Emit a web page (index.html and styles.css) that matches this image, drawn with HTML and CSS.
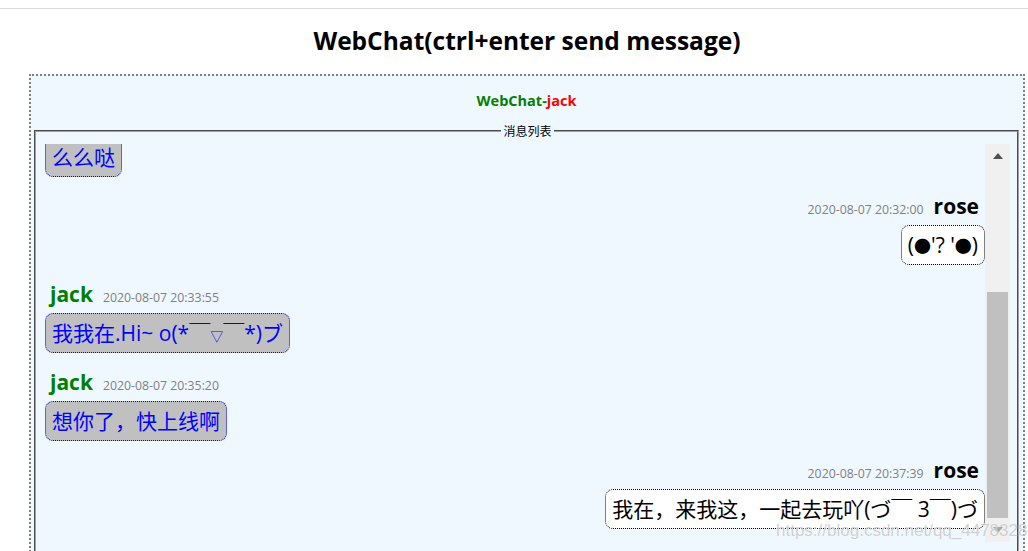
FILE: index.html
```html
<!DOCTYPE html>
<html lang="zh">
<head>
<meta charset="utf-8">
<title>WebChat</title>
<link rel="stylesheet" href="styles.css">
</head>
<body>
<div class="page">
  <div class="topline"></div>
  <h1 class="title">WebChat(ctrl+enter send message)</h1>
  <div class="chatbox">
    <div class="brand"><span class="brand-app">WebChat-</span><span class="brand-user">jack</span></div>
    <fieldset class="msgset">
      <legend class="msglegend">消息列表</legend>
      <div class="msgwrap">
        <div class="viewport">
          <div class="msglist">
            <div class="msg msg-left">
              <div class="bubble bubble-left">么么哒</div>
            </div>
            <div class="msg msg-right">
              <div class="meta"><span class="time">2020-08-07 20:32:00</span><span class="name name-rose">rose</span></div>
              <div class="bubble bubble-right">(<span class="dot">●</span>'? '<span class="dot">●</span>)</div>
            </div>
            <div class="msg msg-left">
              <div class="meta"><span class="name name-jack">jack</span><span class="time">2020-08-07 20:33:55</span></div>
              <div class="bubble bubble-left">我我在.Hi~ o(*￣<span class="tri">▽</span>￣*)ブ</div>
            </div>
            <div class="msg msg-left">
              <div class="meta"><span class="name name-jack">jack</span><span class="time">2020-08-07 20:35:20</span></div>
              <div class="bubble bubble-left">想你了，快上线啊</div>
            </div>
            <div class="msg msg-right">
              <div class="meta"><span class="time">2020-08-07 20:37:39</span><span class="name name-rose">rose</span></div>
              <div class="bubble bubble-right">我在，来我这，一起去玩吖(づ￣ 3￣)づ</div>
            </div>
          </div>
        </div>
        <div class="scrollbar">
          <div class="sb-btn"><span class="arrow-up"></span></div>
          <div class="sb-track"><div class="sb-thumb"></div></div>
          <div class="sb-btn"><span class="arrow-down"></span></div>
        </div>
      </div>
    </fieldset>
  </div>
  <div class="watermark">https://blog.csdn.net/qq_44783283</div>
</div>
</body>
</html>
```
FILE: styles.css
```css
html, body {
  margin: 0;
  padding: 0;
  background: #ffffff;
  overflow: hidden;
}
body {
  font-family: "Open Sans", "Noto Sans CJK SC", sans-serif;
  color: #000;
}
.page {
  position: relative;
  width: 1054px;
  height: 551px;
  overflow: hidden;
}
.topline {
  height: 8px;
  border-bottom: 1px solid #dadada;
}
.title {
  margin: 16px 0 17px;
  font-size: 24.5px;
  line-height: 32px;
  font-weight: 700;
  text-align: center;
}
.chatbox {
  margin: 0 29px;
  border: 2px dotted #808080;
  background: #f0f8ff;
  padding: 15px 4px 20px 3px;
}
.brand {
  text-align: center;
  font-size: 14.5px;
  line-height: 20px;
  font-weight: 700;
}
.brand-app { color: #008000; }
.brand-user { color: #ff0000; }
.msgset {
  margin: 12px 0 0;
  border: 2px groove #a0a0a0;
  padding: 5px 7px 10px 9px;
  min-width: 0;
}
.msglegend {
  margin: 0 auto;
  padding: 0 2px;
  font-size: 12px;
  line-height: 16px;
  height: 16px;
  font-family: "Noto Sans CJK SC", sans-serif;
}
.msgwrap {
  display: flex;
  height: 398px;
}
.viewport {
  flex: 1;
  overflow: hidden;
}
.msglist {
  margin-top: -7px;
  display: flex;
  flex-direction: column;
}
.msg {
  display: flex;
  flex-direction: column;
  margin-bottom: 16px;
}
.msg-left { align-items: flex-start; }
.msg-right { align-items: flex-end; }
.meta {
  height: 26px;
  line-height: 26px;
  margin-bottom: 6px;
  white-space: nowrap;
}
.msg-left .meta { padding-left: 5px; }
.msg-right .meta { padding-right: 6px; }
.name {
  font-size: 21px;
  font-weight: 700;
}
.name-jack { color: #008000; }
.name-rose { color: #000; }
.time {
  font-size: 12.3px;
  color: #808080;
}
.msg-left .time { margin-left: 10px; }
.msg-right .time { margin-right: 10px; }
.bubble {
  box-sizing: border-box;
  height: 40px;
  font-size: 21px;
  line-height: 26px;
  padding: 6px 6px;
  border-radius: 8px;
  white-space: nowrap;
  font-family: "Open Sans", "Noto Sans CJK SC", sans-serif;
}
.dot {
  font-size: 17px;
}
.tri {
  font-size: 13px;
}
.bubble-left {
  background: #c0c0c0;
  color: #0000ff;
  border: 1px dotted #0000ff;
}
.bubble-right {
  background: #ffffff;
  color: #000;
  border: 1px dotted #000;
}
.scrollbar {
  width: 25px;
  display: flex;
  flex-direction: column;
  background: #f0f0f0;
}
.sb-btn {
  height: 24px;
  display: flex;
  align-items: center;
  justify-content: center;
}
.arrow-up {
  width: 0;
  height: 0;
  border-left: 5px solid transparent;
  border-right: 5px solid transparent;
  border-bottom: 6px solid #505050;
}
.arrow-down {
  width: 0;
  height: 0;
  border-left: 5px solid transparent;
  border-right: 5px solid transparent;
  border-top: 6px solid #a3a3a3;
}
.sb-track {
  flex: 1;
  display: flex;
  flex-direction: column;
  justify-content: flex-end;
  padding: 0 2px;
}
.sb-thumb {
  height: 226px;
  background: #c0c0c0;
}
.watermark {
  position: absolute;
  left: 776px;
  top: 521px;
  font-family: "Liberation Sans", Arial, sans-serif;
  font-size: 17px;
  color: rgba(170, 170, 170, 0.55);
  white-space: nowrap;
  text-shadow: 0 0 1px rgba(255, 255, 255, 0.8);
}
```
